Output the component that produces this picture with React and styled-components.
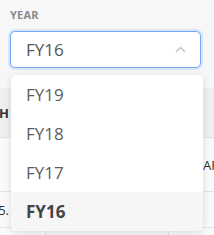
import React from "react";
import styled, { createGlobalStyle } from "styled-components";

const Global = createGlobalStyle`
  html, body { margin: 0; padding: 0; }
  body {
    background: #f7f7f7;
    font-family: "Open Sans", "Noto Sans", Arial, sans-serif;
    width: 214px;
    height: 235px;
    overflow: hidden;
  }
`;

const Page = styled.div`
  position: relative;
  width: 214px;
  height: 235px;
  overflow: hidden;
`;

const Filter = styled.div`
  padding: 8px 13px 0 10px;
`;

const Label = styled.div`
  font-size: 11px;
  font-weight: 700;
  color: #8a8a8a;
  letter-spacing: 0.2px;
  line-height: 14px;
  margin-bottom: 9px;
`;

const SelectWrap = styled.div`
  position: relative;
`;

const SelectBox = styled.div`
  position: relative;
  box-sizing: border-box;
  height: 37px;
  width: 191px;
  border: 1px solid #6fa9f2;
  border-radius: 5px;
  background: #fff;
  box-shadow: 0 0 0 2px rgba(120, 170, 240, 0.22);
  display: flex;
  align-items: center;
  justify-content: space-between;
  padding: 0 14px 0 15px;
  font-size: 17px;
  color: #555;
`;

const Menu = styled.div`
  position: absolute;
  top: 44px;
  left: 1px;
  width: 192px;
  background: #fff;
  border-radius: 5px;
  box-shadow: 0 2px 8px rgba(0, 0, 0, 0.13);
  overflow: hidden;
  z-index: 5;
`;

const Option = styled.div`
  height: 39px;
  display: flex;
  align-items: center;
  padding-left: 15px;
  font-size: 17px;
  color: ${(p) => (p.$active ? "#444" : "#5e5e5e")};
  font-weight: ${(p) => (p.$active ? 700 : 400)};
  background: ${(p) => (p.$active ? "#f6f6f6" : "#fff")};
`;

const Table = styled.div`
  margin-top: 20px;
  width: 214px;
`;

const Row = styled.div`
  display: grid;
  grid-template-columns: 45px 123px 46px;
  height: ${(p) => p.$h}px;
  background: ${(p) => (p.$head ? "#efefef" : "#fafafa")};
  border-bottom: 1px solid #e3e3e3;
  box-sizing: border-box;
`;

const Cell = styled.div`
  display: flex;
  align-items: center;
  overflow: hidden;
  white-space: nowrap;
  font-size: 13px;
  color: #333;
  font-weight: ${(p) => (p.$bold ? 700 : 400)};
  justify-content: ${(p) => (p.$end ? "flex-end" : "flex-start")};
  padding-right: ${(p) => (p.$end ? "36px" : "0")};
  padding-left: ${(p) => (p.$pl ? p.$pl : 0)}px;
  border-left: ${(p) => (p.$line ? "1px solid #e3e3e3" : "none")};
`;

const Chevron = () => (
  <svg width="11" height="7" viewBox="0 0 11 7" fill="none">
    <path d="M1 6 L5.5 1.5 L10 6" stroke="#c2c2c2" strokeWidth="1.3" />
  </svg>
);

export default function App() {
  const years = ["FY19", "FY18", "FY17", "FY16"];
  return (
    <Page>
      <Global />
      <Filter>
        <Label>YEAR</Label>
        <SelectWrap>
          <SelectBox>
            <span>FY16</span>
            <Chevron />
          </SelectBox>
          <Menu>
            {years.map((y) => (
              <Option key={y} $active={y === "FY16"}>
                {y}
              </Option>
            ))}
          </Menu>
        </SelectWrap>
      </Filter>
      <Table>
        <Row $head $h={50}>
          <Cell $end $bold>MONTH</Cell>
          <Cell />
          <Cell />
        </Row>
        <Row $h={54}>
          <Cell />
          <Cell />
          <Cell $pl={35}>ARS</Cell>
        </Row>
        <Row $h={36}>
          <Cell $end>15.</Cell>
          <Cell $line />
          <Cell $line />
        </Row>
        <Row $h={36}>
          <Cell />
          <Cell $line />
          <Cell $line />
        </Row>
      </Table>
    </Page>
  );
}
